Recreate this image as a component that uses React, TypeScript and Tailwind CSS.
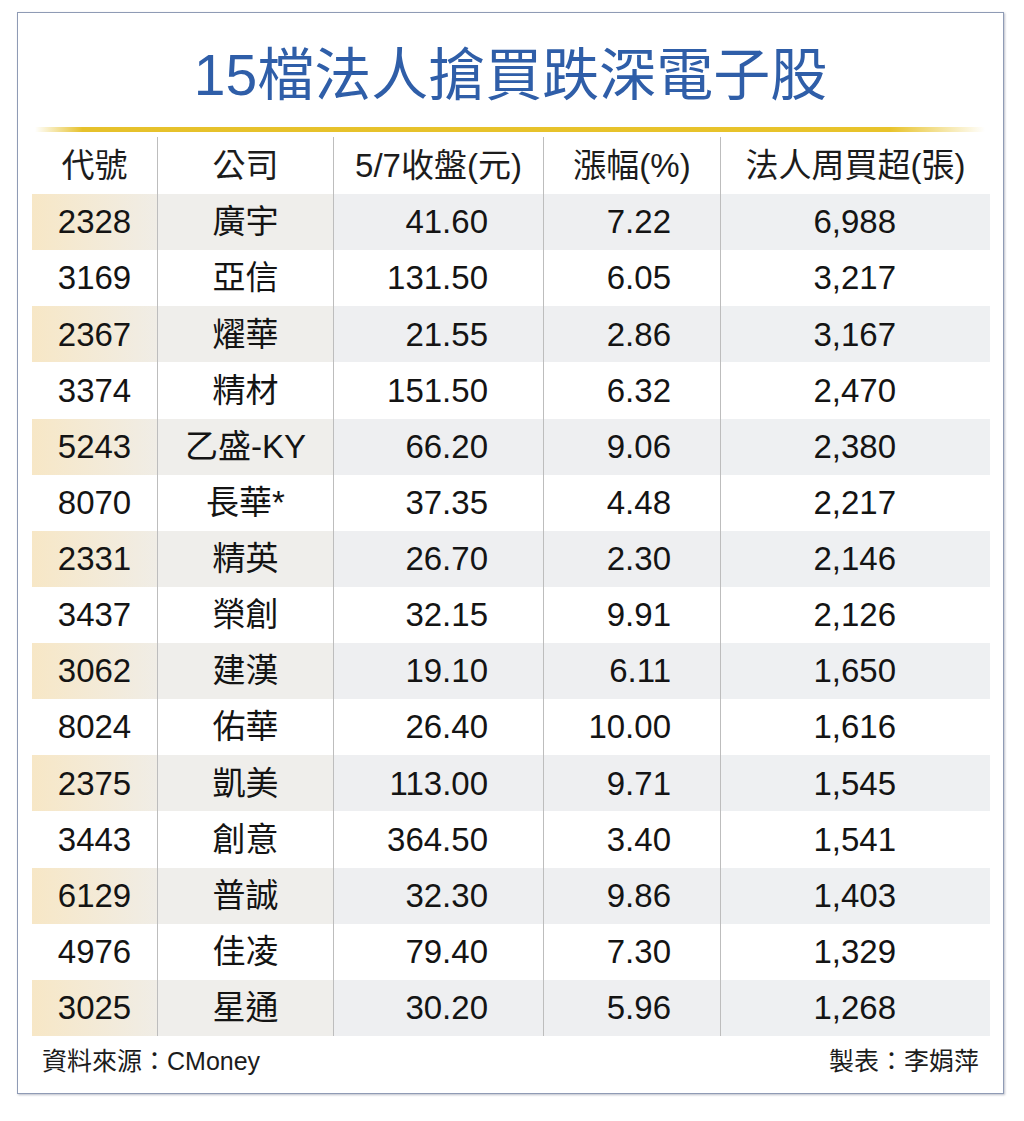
import React from "react";

type Row = {
  code: string;
  name: string;
  close: string;
  change: string;
  buy: string;
};

const rows: Row[] = [
  { code: "2328", name: "廣宇", close: "41.60", change: "7.22", buy: "6,988" },
  { code: "3169", name: "亞信", close: "131.50", change: "6.05", buy: "3,217" },
  { code: "2367", name: "燿華", close: "21.55", change: "2.86", buy: "3,167" },
  { code: "3374", name: "精材", close: "151.50", change: "6.32", buy: "2,470" },
  { code: "5243", name: "乙盛-KY", close: "66.20", change: "9.06", buy: "2,380" },
  { code: "8070", name: "長華*", close: "37.35", change: "4.48", buy: "2,217" },
  { code: "2331", name: "精英", close: "26.70", change: "2.30", buy: "2,146" },
  { code: "3437", name: "榮創", close: "32.15", change: "9.91", buy: "2,126" },
  { code: "3062", name: "建漢", close: "19.10", change: "6.11", buy: "1,650" },
  { code: "8024", name: "佑華", close: "26.40", change: "10.00", buy: "1,616" },
  { code: "2375", name: "凱美", close: "113.00", change: "9.71", buy: "1,545" },
  { code: "3443", name: "創意", close: "364.50", change: "3.40", buy: "1,541" },
  { code: "6129", name: "普誠", close: "32.30", change: "9.86", buy: "1,403" },
  { code: "4976", name: "佳凌", close: "79.40", change: "7.30", buy: "1,329" },
  { code: "3025", name: "星通", close: "30.20", change: "5.96", buy: "1,268" },
];

const font = {
  fontFamily: '"Liberation Sans", "Noto Sans CJK TC", sans-serif',
};

const cols = "grid grid-cols-[125px_176px_210px_177px_270px]";

const TableHeader: React.FC = () => (
  <div className={`${cols} h-[57px] text-[33px] text-[#1c1c1c]`}>
    <div className="flex items-center justify-center">代號</div>
    <div className="flex items-center justify-center border-l border-[#bdbdbd]">公司</div>
    <div className="flex items-center justify-center border-l border-[#bdbdbd]">5/7收盤(元)</div>
    <div className="flex items-center justify-center border-l border-[#bdbdbd]">漲幅(%)</div>
    <div className="flex items-center justify-center border-l border-[#bdbdbd]">法人周買超(張)</div>
  </div>
);

const TableRow: React.FC<{ row: Row; shaded: boolean }> = ({ row, shaded }) => (
  <div className={`${cols} h-[56.14px] text-[33px] text-[#141414]`}>
    <div
      className={`flex items-center justify-center ${
        shaded ? "bg-gradient-to-r from-[#f7e7c6] to-[#f0ede6]" : ""
      }`}
    >
      {row.code}
    </div>
    <div
      className={`flex items-center justify-center border-l border-[#bdbdbd] ${
        shaded ? "bg-[#efeeeb]" : ""
      }`}
    >
      {row.name}
    </div>
    <div
      className={`flex items-center justify-end pr-[55px] border-l border-[#bdbdbd] ${
        shaded ? "bg-[#eeeff1]" : ""
      }`}
    >
      {row.close}
    </div>
    <div
      className={`flex items-center justify-end pr-[49px] border-l border-[#bdbdbd] ${
        shaded ? "bg-[#eeeff1]" : ""
      }`}
    >
      {row.change}
    </div>
    <div
      className={`flex items-center justify-end pr-[94px] border-l border-[#bdbdbd] ${
        shaded ? "bg-[#eef0f2]" : ""
      }`}
    >
      {row.buy}
    </div>
  </div>
);

const App: React.FC = () => {
  return (
    <div className="w-[1024px] h-[1121px] bg-white pt-[12px] pl-[17px]" style={font}>
      <div className="w-[987px] h-[1082px] border border-[#8f9bb5] shadow-[1px_1px_2px_rgba(60,70,100,0.35)] flex flex-col">
        <div className="h-[114px] flex items-center justify-center pt-[10px]">
          <h1 className="text-[57px] leading-none text-[#2f5ea8] font-normal">
            15檔法人搶買跌深電子股
          </h1>
        </div>

        <div className="ml-[17px] w-[950px] h-[5px] bg-[linear-gradient(to_right,rgba(232,194,42,0)_0%,#e6c12b_5%,#e8c32a_90%,rgba(232,194,42,0)_100%)]" />

        <div className="ml-[14px] mt-[5px]">
          <TableHeader />
          {rows.map((row, i) => (
            <TableRow key={row.code} row={row} shaded={i % 2 === 0} />
          ))}
        </div>

        <div className="flex flex-1 items-center justify-between pl-[24px] pr-[24px] pb-[6px] text-[25px] text-[#1c1c1c]">
          <span>資料來源：CMoney</span>
          <span>製表：李娟萍</span>
        </div>
      </div>
    </div>
  );
};

export default App;
